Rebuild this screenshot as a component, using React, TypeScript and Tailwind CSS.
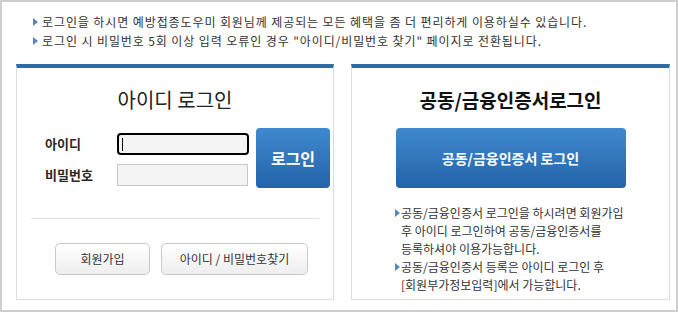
import React from "react";

const font = {
  fontFamily: '"Noto Sans CJK KR", "Noto Sans", sans-serif',
};

function Arrow({ gap = "mr-[4px]" }: { gap?: string }) {
  return (
    <span
      className={`inline-block w-0 h-0 border-y-[4px] border-y-transparent border-l-[5px] border-l-[#5a86bb] shrink-0 ${gap}`}
    />
  );
}

export default function App() {
  return (
    <div
      className="w-[678px] h-[312px] box-border border-2 border-[#cfcfcf] bg-white text-[#333] flex flex-col"
      style={font}
    >
      {/* notices */}
      <div className="pt-[10px] pl-[31px] text-[12px] leading-[19px] tracking-[0.9px]">
        <div className="flex items-center whitespace-nowrap">
          <Arrow />
          로그인을 하시면 예방접종도우미 회원님께 제공되는 모든 혜택을 좀 더 편리하게 이용하실수 있습니다.
        </div>
        <div className="flex items-center whitespace-nowrap">
          <Arrow />
          로그인 시 비밀번호 5회 이상 입력 오류인 경우 "아이디/비밀번호 찾기" 페이지로 전환됩니다.
        </div>
      </div>

      <div className="flex gap-[17px] pl-[14px] mt-[14px]">
        {/* ID login */}
        <div className="w-[318px] h-[236px] box-border border border-[#dcdcdc] border-t-4 border-t-[#2b6ca4] flex flex-col">
          <h2 className="mt-[18px] text-center text-[20px] leading-[28px] text-[#222] font-normal">
            아이디 로그인
          </h2>
          <div className="flex mt-[14px] pl-[28px]">
            <div className="flex flex-col gap-[9px] pt-[5px]">
              <div className="flex items-center h-[22px]">
                <span className="w-[72px] text-[13px] font-bold text-[#2e2626]">아이디</span>
                <div className="w-[132px] h-[22px] box-border border-2 border-black rounded-[4px] bg-[#f4f4f4] flex items-center pl-[3px]">
                  <span className="w-px h-[13px] bg-black" />
                </div>
              </div>
              <div className="flex items-center h-[22px]">
                <span className="w-[72px] text-[13px] font-bold text-[#2e2626]">비밀번호</span>
                <div className="w-[131px] h-[22px] box-border border border-[#c8c8c8] bg-[#f3f3f3]" />
              </div>
            </div>
            <button className="ml-[7px] w-[74px] h-[60px] rounded-[4px] bg-gradient-to-b from-[#4089cf] to-[#2363a9] text-white text-[16px] font-bold">
              로그인
            </button>
          </div>
          <div className="mt-[30px] mx-[14px] h-px bg-[#e0e0e0]" />
          <div className="flex gap-[11px] pl-[38px] mt-[24px]">
            <button className="w-[95px] h-[32px] box-border border border-[#c9c9c9] rounded-[5px] bg-gradient-to-b from-white to-[#eeeeee] text-[12px] text-[#333]">
              회원가입
            </button>
            <button className="w-[147px] h-[32px] box-border border border-[#c9c9c9] rounded-[5px] bg-gradient-to-b from-white to-[#eeeeee] text-[12px] text-[#333]">
              아이디 / 비밀번호찾기
            </button>
          </div>
        </div>

        {/* certificate login */}
        <div className="w-[319px] h-[236px] box-border border border-[#dcdcdc] border-t-4 border-t-[#2b6ca4] flex flex-col items-center">
          <h2 className="mt-[18px] text-center text-[19px] leading-[28px] text-[#111] font-bold">
            공동/금융인증서로그인
          </h2>
          <button className="mt-[14px] w-[230px] h-[60px] rounded-[4px] bg-gradient-to-b from-[#4089cf] to-[#2363a9] text-white text-[14px] font-bold">
            공동/금융인증서 로그인
          </button>
          <div className="self-start ml-[43px] mt-[16px] text-[12px] leading-[18px] text-[#333]">
            <div className="flex items-start whitespace-nowrap">
              <span className="mt-[5px] flex"><Arrow gap="mr-[1px]" /></span>
              <span>
                공동/금융인증서 로그인을 하시려면 회원가입
                <br />후 아이디 로그인하여 공동/금융인증서를
                <br />등록하셔야 이용가능합니다.
              </span>
            </div>
            <div className="flex items-start whitespace-nowrap">
              <span className="mt-[5px] flex"><Arrow gap="mr-[1px]" /></span>
              <span>
                공동/금융인증서 등록은 아이디 로그인 후
                <br />[회원부가정보입력]에서 가능합니다.
              </span>
            </div>
          </div>
        </div>
      </div>
    </div>
  );
}
